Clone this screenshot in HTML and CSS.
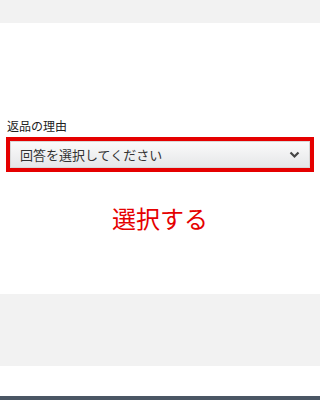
FILE: index.html
```html
<!DOCTYPE html>
<html lang="ja">
<head>
<meta charset="utf-8">
<link rel="stylesheet" href="styles.css">
</head>
<body>
<div class="top-band"></div>
<main class="content">
  <div class="label">返品の理由</div>
  <div class="highlight">
    <div class="select">
      <span class="select-text">回答を選択してください</span>
      <svg class="chevron" width="11" height="8" viewBox="0 0 11 8"><path d="M1.5 1.5 L5.5 5.5 L9.5 1.5" fill="none" stroke="#444" stroke-width="2.2"/></svg>
    </div>
  </div>
  <div class="action">選択する</div>
</main>
<div class="gray-band"></div>
<div class="white-band"></div>
<div class="footer-bar"></div>
</body>
</html>
```

FILE: styles.css
```css
html, body {
  margin: 0;
  padding: 0;
  background: #fff;
  font-family: "Noto Sans CJK JP", "Noto Sans", sans-serif;
}
.top-band {
  height: 23px;
  background: #f2f2f2;
}
.content {
  height: 271px;
  box-sizing: border-box;
  padding-top: 95px;
  display: flex;
  flex-direction: column;
}
.label {
  margin-left: 7px;
  font-size: 12px;
  line-height: 16px;
  color: #222;
  margin-bottom: 3px;
}
.highlight {
  margin: 0 6px;
  border: 4px solid #e50000;
}
.select {
  height: 27px;
  box-sizing: border-box;
  border: 1px solid #d8d8d8;
  background: linear-gradient(#fafafa, #e6e7e9);
  display: flex;
  align-items: center;
  justify-content: space-between;
  padding: 0 9px 0 9px;
}
.select-text {
  font-size: 13px;
  color: #333;
  line-height: 16px;
}
.chevron {
  display: block;
}
.action {
  margin-top: 31px;
  text-align: center;
  font-size: 24px;
  line-height: 30px;
  color: #e50000;
}
.gray-band {
  height: 72px;
  background: #f2f2f2;
}
.white-band {
  height: 30px;
}
.footer-bar {
  height: 10px;
  background: #4a5664;
}
```
